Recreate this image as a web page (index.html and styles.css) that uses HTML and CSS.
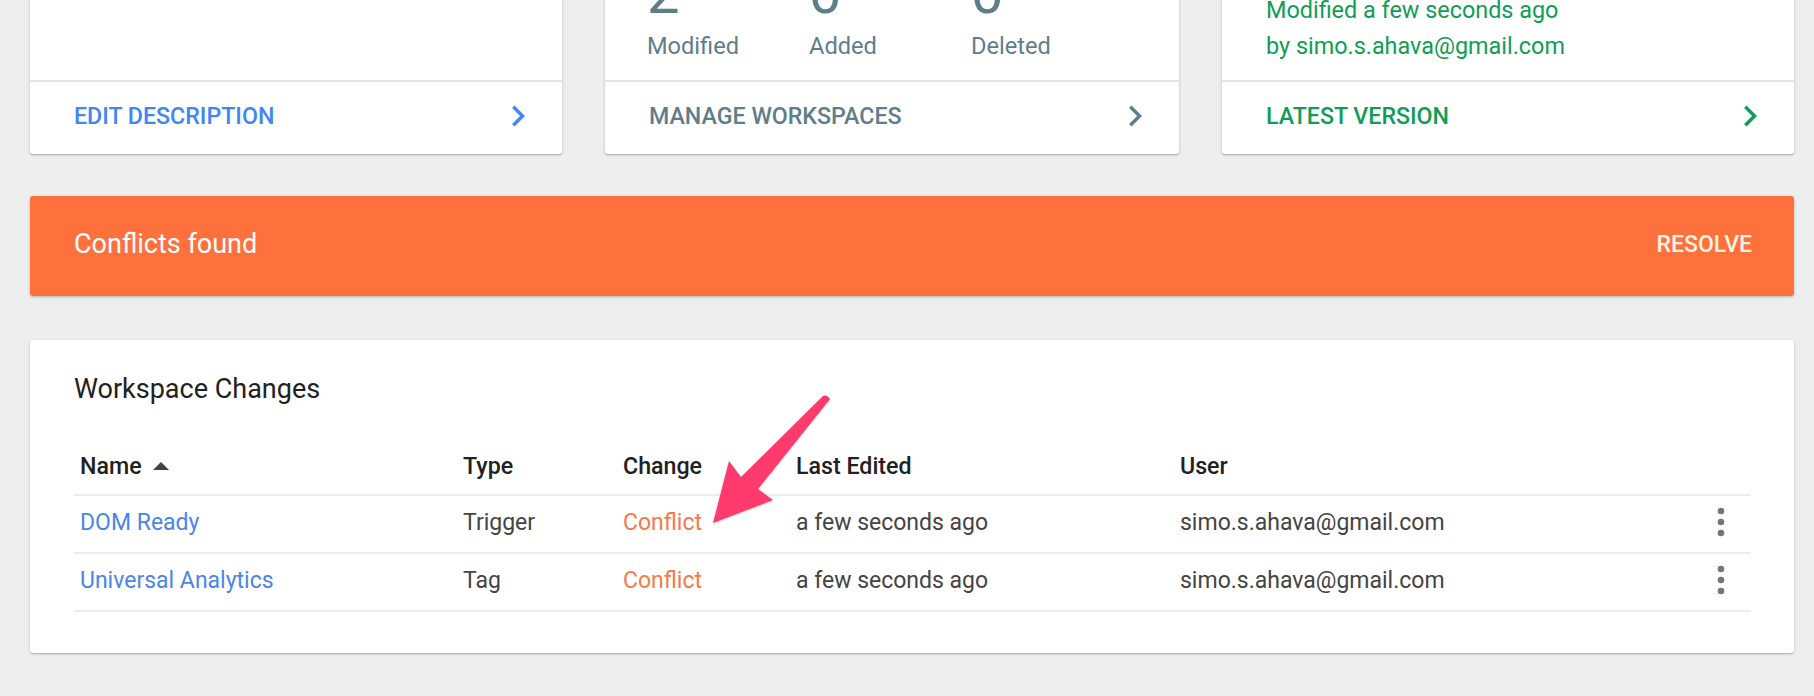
FILE: index.html
```html
<!DOCTYPE html>
<html>
<head>
<meta charset="utf-8">
<link rel="stylesheet" href="styles.css">
</head>
<body>
<div class="page">
  <div class="top-row">
    <div class="card">
      <div class="card-body"></div>
      <a class="card-foot blue">EDIT DESCRIPTION
        <svg class="chev" viewBox="0 0 24 24"><path d="M10 6L8.59 7.41 13.17 12l-4.58 4.59L10 18l6-6z"/></svg>
      </a>
    </div>
    <div class="card">
      <div class="card-body">
        <div class="stats">
          <div class="stat"><div class="num">2</div><div class="lbl">Modified</div></div>
          <div class="stat"><div class="num">0</div><div class="lbl">Added</div></div>
          <div class="stat"><div class="num">0</div><div class="lbl">Deleted</div></div>
        </div>
      </div>
      <a class="card-foot grey">MANAGE WORKSPACES
        <svg class="chev" viewBox="0 0 24 24"><path d="M10 6L8.59 7.41 13.17 12l-4.58 4.59L10 18l6-6z"/></svg>
      </a>
    </div>
    <div class="card">
      <div class="card-body">
        <div class="version">
          <div class="vline">Modified a few seconds ago</div>
          <div class="vline">by simo.s.ahava@gmail.com</div>
        </div>
      </div>
      <a class="card-foot green">LATEST VERSION
        <svg class="chev" viewBox="0 0 24 24"><path d="M10 6L8.59 7.41 13.17 12l-4.58 4.59L10 18l6-6z"/></svg>
      </a>
    </div>
  </div>

  <div class="banner">
    <span class="banner-text">Conflicts found</span>
    <span class="banner-btn">RESOLVE</span>
  </div>

  <div class="changes">
    <div class="changes-title">Workspace Changes</div>
    <div class="table">
      <div class="row head">
        <div class="cell">Name <svg class="sort" viewBox="0 0 16 8"><path d="M0 8L8 0L16 8z"/></svg></div>
        <div class="cell">Type</div>
        <div class="cell">Change</div>
        <div class="cell">Last Edited</div>
        <div class="cell">User</div>
        <div class="cell"></div>
      </div>
      <div class="row">
        <div class="cell link">DOM Ready</div>
        <div class="cell">Trigger</div>
        <div class="cell conflict">Conflict</div>
        <div class="cell">a few seconds ago</div>
        <div class="cell">simo.s.ahava@gmail.com</div>
        <div class="cell kebab"><svg viewBox="0 0 8 30"><circle cx="4" cy="4" r="3.3"/><circle cx="4" cy="15" r="3.3"/><circle cx="4" cy="26" r="3.3"/></svg></div>
      </div>
      <div class="row">
        <div class="cell link">Universal Analytics</div>
        <div class="cell">Tag</div>
        <div class="cell conflict">Conflict</div>
        <div class="cell">a few seconds ago</div>
        <div class="cell">simo.s.ahava@gmail.com</div>
        <div class="cell kebab"><svg viewBox="0 0 8 30"><circle cx="4" cy="4" r="3.3"/><circle cx="4" cy="15" r="3.3"/><circle cx="4" cy="26" r="3.3"/></svg></div>
      </div>
    </div>
  </div>
</div>
<svg class="annot" viewBox="0 0 140 140">
  <path d="M13 133 L29 71 L41 87 L123 6 Q127 4 130 9 L58 99 L73 110 Z"/>
</svg>
</body>
</html>
```
FILE: styles.css
```css
* { box-sizing: border-box; }
html, body { margin: 0; padding: 0; }
body {
  background: #eeeeee;
  font-family: Roboto, "Noto Sans", sans-serif;
  width: 1814px;
  height: 696px;
  overflow: hidden;
  position: relative;
}
.page {
  padding: 0 20px 0 30px;
}
.top-row {
  display: grid;
  grid-template-columns: 532px 574px 572px;
  column-gap: 43px;
  margin-top: -120px;
}
.card {
  background: #fff;
  border-radius: 3px;
  box-shadow: 0 1px 3px rgba(0,0,0,0.22), 0 1px 1px rgba(0,0,0,0.1);
  display: flex;
  flex-direction: column;
}
.card-body {
  height: 200px;
  padding: 0 44px 16px;
  display: flex;
  flex-direction: column;
  justify-content: flex-end;
}
.card-foot {
  height: 74px;
  border-top: 2px solid #e4e4e4;
  display: flex;
  align-items: center;
  justify-content: space-between;
  padding: 0 23px 4px 44px;
  font-size: 23.2px;
  font-weight: 500;
}
.card-foot .chev { width: 42px; height: 42px; fill: currentColor; }
.blue { color: #4285f4; }
.grey { color: #607d8b; }
.green { color: #0f9d58; }
.stats {
  display: flex;
  margin-left: -2px;
}
.stat { width: 162px; color: #607d8b; }
.num { font-size: 58px; line-height: 50px; }
.lbl { font-size: 23.6px; line-height: 36px; margin-top: 10px; }
.version { color: #0f9d58; font-size: 23.4px; }
.vline { line-height: 36px; }

.banner {
  margin-top: 42px;
  height: 100px;
  background: #ff713c;
  border-radius: 3px;
  box-shadow: 0 1px 3px rgba(0,0,0,0.25);
  display: flex;
  align-items: center;
  justify-content: space-between;
  padding: 0 42px 4px 44px;
  color: #fff;
}
.banner-text { font-size: 27px; }
.banner-btn { font-size: 23px; font-weight: 500; color: #fff3e6; }

.changes {
  margin-top: 44px;
  background: #fff;
  border-radius: 3px;
  box-shadow: 0 1px 3px rgba(0,0,0,0.22), 0 1px 1px rgba(0,0,0,0.1);
  padding: 33px 43px 41px 44px;
}
.changes-title {
  font-size: 27px;
  line-height: 32px;
  color: #212121;
  margin-bottom: 33px;
}
.row {
  display: grid;
  grid-template-columns: 383px 160px 173px 384px 516px 1fr;
  height: 58px;
  border-bottom: 2px solid #ececec;
  align-items: center;
  font-size: 23px;
  color: #444444;
  padding-bottom: 4px;
}
.row.head { font-weight: 500; color: #212121; font-size: 23.2px; padding-bottom: 0; }
.cell { padding-left: 6px; display: flex; align-items: center; }
.sort { width: 16px; height: 8px; margin-left: 11px; fill: #424242; }
.link { color: #4a86e8; }
.conflict { color: #f57a4c; }
.kebab { justify-content: center; padding-left: 0; }
.kebab svg { width: 8px; height: 30px; fill: #757575; }

.annot {
  position: absolute;
  left: 700px;
  top: 390px;
  width: 140px;
  height: 140px;
  fill: #ff3a6c;
  filter: drop-shadow(0 1px 1px rgba(0,0,0,0.2));
}
```
